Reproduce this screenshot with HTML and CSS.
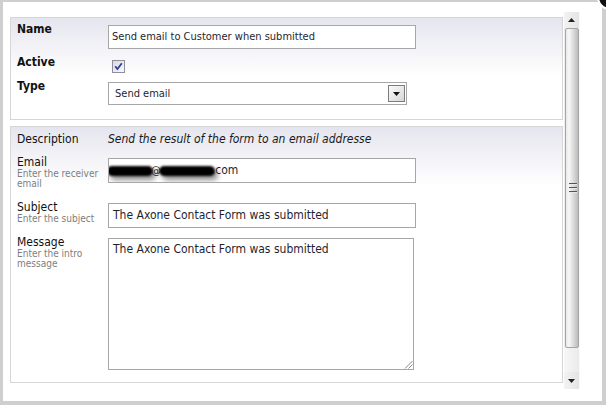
FILE: index.html
```html
<!DOCTYPE html>
<html>
<head>
<meta charset="utf-8">
<link rel="stylesheet" href="styles.css">
</head>
<body>
<div class="window">
  <div class="pane">
    <div class="content">
      <div class="section s1">
        <div class="row r-name">
          <div class="label bold">Name</div>
          <div class="field"><div class="input small">Send email to Customer when submitted</div></div>
        </div>
        <div class="row r-active">
          <div class="label bold">Active</div>
          <div class="field">
            <span class="checkbox"><svg width="13" height="13" viewBox="0 0 13 13"><rect x="0.5" y="0.5" width="12" height="12" fill="url(#cbg)" stroke="#8e8ea0"/><defs><linearGradient id="cbg" x1="0" y1="0" x2="1" y2="1"><stop offset="0" stop-color="#d8d8dc"/><stop offset="1" stop-color="#fbfbfb"/></linearGradient></defs><polyline points="3.2,6.2 5.4,9 9.8,3.2" fill="none" stroke="#2b3c9e" stroke-width="1.7"/></svg></span>
          </div>
        </div>
        <div class="row r-type">
          <div class="label bold">Type</div>
          <div class="field">
            <div class="select">
              <span class="select-text">Send email</span>
              <span class="select-btn"><svg width="7" height="4" viewBox="0 0 7 4"><polygon points="0,0 7,0 3.5,4" fill="#111"/></svg></span>
            </div>
          </div>
        </div>
      </div>

      <div class="section s2">
        <div class="row r-desc">
          <div class="label">Description</div>
          <div class="field desc">Send the result of the form to an email addresse</div>
        </div>
        <div class="row r-email">
          <div class="label">Email<span class="help">Enter the receiver email</span></div>
          <div class="field"><div class="input big email"><span class="blot b1"></span><span class="at">@</span><span class="blot b2"></span><span class="dom">.com</span></div></div>
        </div>
        <div class="row r-subject">
          <div class="label">Subject<span class="help">Enter the subject</span></div>
          <div class="field"><div class="input big">The Axone Contact Form was submitted</div></div>
        </div>
        <div class="row r-message">
          <div class="label">Message<span class="help">Enter the intro message</span></div>
          <div class="field">
            <div class="textarea">The Axone Contact Form was submitted
              <svg class="grip" width="9" height="9" viewBox="0 0 9 9"><line x1="1" y1="8.5" x2="8.5" y2="1" stroke="#888" stroke-width="1"/><line x1="4.5" y1="8.5" x2="8.5" y2="4.5" stroke="#888" stroke-width="1"/></svg>
            </div>
          </div>
        </div>
      </div>
    </div>

    <div class="scrollbar">
      <div class="sb-btn"><svg width="7" height="4" viewBox="0 0 7 4"><polygon points="3.5,0 7,4 0,4" fill="#222"/></svg></div>
      <div class="sb-thumb"><span class="grip-lines"><i></i><i></i><i></i></span></div>
      <div class="sb-track"></div>
      <div class="sb-btn down"><svg width="7" height="4" viewBox="0 0 7 4"><polygon points="0,0 7,0 3.5,4" fill="#222"/></svg></div>
    </div>
  </div>
  <span class="close"></span>
</div>
</body>
</html>
```

FILE: styles.css
```css
html, body {
  margin: 0;
  padding: 0;
  background: #ffffff;
  overflow: hidden;
}

.window {
  position: relative;
  width: 606px;
  height: 405px;
  box-sizing: border-box;
  border-style: solid;
  border-color: #cfcfcf;
  border-width: 2px 4px 4px 3px;
  background: #ffffff;
  padding: 10px 0 0 7px;
  font-family: "DejaVu Sans Condensed", "DejaVu Sans", sans-serif;
  font-stretch: condensed;
  color: #111;
}

.pane {
  display: flex;
  height: 377px;
}

.content {
  width: 553px;
  padding-top: 5px;
}

.section {
  box-sizing: border-box;
  border: 1px solid #d6d6d6;
  background: linear-gradient(to bottom, #e5e5ef 0, #ffffff 58px);
  padding-left: 6px;
}

.s1 {
  padding-top: 4px;
  padding-bottom: 14px;
}

.s2 {
  margin-top: 6px;
  padding-top: 5px;
  padding-bottom: 12px;
}

.row {
  display: flex;
  align-items: flex-start;
}

.label {
  width: 91px;
  flex: none;
  font-size: 12px;
  line-height: 14px;
  color: #111;
}

.bold {
  font-weight: bold;
}

.help {
  display: block;
  font-size: 10px;
  line-height: 10px;
  color: #7e7e7e;
  padding-right: 8px;
}

.field {
  flex: none;
}

.r-active { margin-top: 6px; }
.r-type { margin-top: 6px; }
.r-email { margin-top: 9px; }
.r-subject { margin-top: 11px; }
.r-message { margin-top: 7px; }

.r-name .field,
.r-type .field,
.r-email .field,
.r-subject .field,
.r-message .field {
  margin-top: 3px;
}

.input {
  box-sizing: border-box;
  width: 308px;
  border: 1px solid #a7a7a7;
  background: #fff;
  color: #1f1f30;
  white-space: nowrap;
  overflow: hidden;
}

.input.small {
  height: 24px;
  font-size: 11px;
  line-height: 22px;
  padding-left: 3px;
}

.input.big {
  height: 25px;
  font-size: 12px;
  line-height: 22px;
  padding-left: 4px;
}

.email {
  position: relative;
}

.blot {
  display: inline-block;
  height: 10px;
  background: #000;
  border-radius: 6px;
  vertical-align: -2px;
  filter: blur(1.3px);
  box-shadow: 3px 4px 5px rgba(0, 0, 0, 0.45);
}

.b1 { width: 46px; margin-left: -6px; margin-right: -2px; }
.b2 { width: 56px; margin-left: -2px; margin-right: -3px; }
.at { font-size: 11px; position: relative; }
.dom { position: relative; z-index: 1; }

.r-active .field {
  padding-left: 4px;
  padding-top: 5px;
}

.checkbox {
  display: block;
  width: 13px;
  height: 13px;
}

.checkbox svg { display: block; }

.select {
  box-sizing: border-box;
  width: 299px;
  height: 23px;
  border: 1px solid #a7a7a7;
  background: #fff;
  display: flex;
  align-items: center;
  justify-content: space-between;
  padding: 0 1px 0 6px;
}

.select-text {
  font-size: 11px;
  color: #1f1f30;
}

.select-btn {
  box-sizing: border-box;
  width: 17px;
  height: 17px;
  border: 1px solid #7d7d7d;
  background: linear-gradient(135deg, #fbfbfb, #d6d6d6);
  display: flex;
  align-items: center;
  justify-content: center;
}

.select-btn svg { display: block; }

.desc {
  font-size: 12px;
  line-height: 14px;
  font-style: italic;
  color: #1a1a1a;
}

.textarea {
  position: relative;
  box-sizing: border-box;
  width: 306px;
  height: 132px;
  border: 1px solid #a7a7a7;
  background: #fff;
  font-size: 12px;
  line-height: 14px;
  padding: 3px 4px;
  color: #1f1f30;
}

.grip {
  position: absolute;
  right: 0;
  bottom: 0;
}

.scrollbar {
  width: 16px;
  margin-left: 1px;
  display: flex;
  flex-direction: column;
  background: #efefef;
  border-right: 1px solid #fafafa;
  box-sizing: border-box;
}

.sb-btn {
  height: 16px;
  flex: none;
  display: flex;
  align-items: center;
  justify-content: center;
  background: linear-gradient(to right, #f3f3f3, #e4e4e4);
}

.sb-btn.down {
  height: 17px;
}

.sb-thumb {
  flex: none;
  height: 320px;
  margin: 0 0 0 1px;
  width: 14px;
  box-sizing: border-box;
  border: 1px solid #a4a4a4;
  border-radius: 2px;
  background: linear-gradient(to right, #e9e9e9 0, #f7f7f7 25%, #dcdcdc 60%, #bcbcbc 100%);
  display: flex;
  align-items: center;
  justify-content: center;
}

.grip-lines {
  display: flex;
  flex-direction: column;
  gap: 2px;
  margin-left: 1px;
}

.grip-lines i {
  display: block;
  width: 8px;
  height: 2px;
  background: linear-gradient(to bottom, #555 50%, #e8e8e8 50%);
}

.sb-track {
  flex: 1;
  background: linear-gradient(to right, #f7f7f7, #eaeaea);
}

.close {
  position: absolute;
  left: 594px;
  top: -18px;
  width: 22px;
  height: 22px;
  border-radius: 50%;
  background: #111;
  border: 2px solid #fff;
}
```
